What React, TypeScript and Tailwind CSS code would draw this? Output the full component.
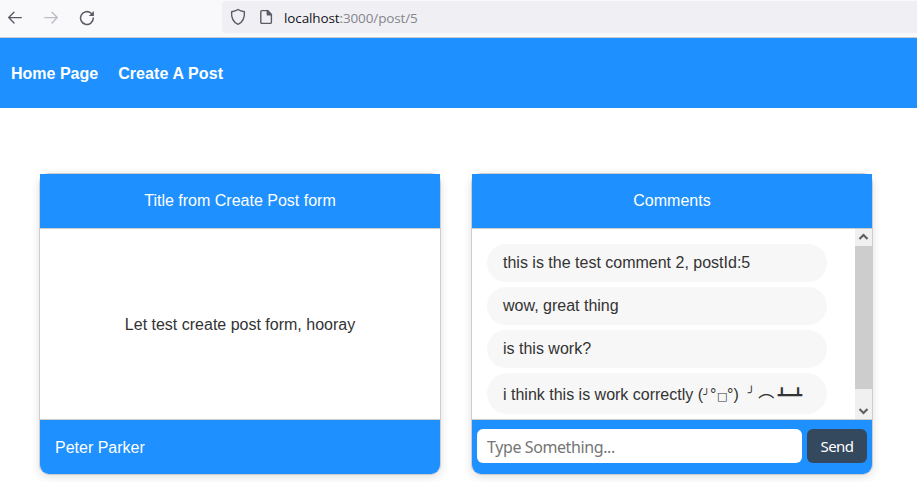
import type { ReactNode } from "react";

function BrowserBar() {
  return (
    <div className="flex h-[38px] border-b border-[#cccccc] bg-[#f9f9fb]">
      <div className="flex w-[222px] items-start gap-[18px] pl-[6px] pt-[9px]">
        <svg width="18" height="18" viewBox="0 0 18 18" fill="none" stroke="#5b5b66" strokeWidth="1.4" strokeLinecap="round" strokeLinejoin="round">
          <path d="M15.3 8.6H2.7M8 3.3L2.7 8.6L8 13.9" />
        </svg>
        <svg width="18" height="18" viewBox="0 0 18 18" fill="none" stroke="#bdbdc3" strokeWidth="1.4" strokeLinecap="round" strokeLinejoin="round">
          <path d="M2.7 8.6H15.3M10 3.3L15.3 8.6L10 13.9" />
        </svg>
        <svg width="18" height="18" viewBox="0 0 18 18" fill="none" stroke="#5b5b66" strokeWidth="1.5" strokeLinecap="round">
          <path d="M15.3 9A6.4 6.4 0 1 1 13.2 4.3" />
          <path d="M15.9 2V7.1H10.8Z" fill="#5b5b66" stroke="none" />
        </svg>
      </div>
      <div className="mt-px flex h-[32px] flex-1 items-start rounded-l bg-[#f0f0f4] pl-[8px]">
        <svg className="mt-[7px]" width="17" height="18" viewBox="0 0 17 18" fill="none" stroke="#5b5b66" strokeWidth="1.4" strokeLinejoin="round">
          <path d="M8 1.5C6.3 2.6 3.9 3.4 1.6 3.8C1.2 9.5 3.4 14.4 8 16.3C12.6 14.4 14.8 9.5 14.4 3.8C12.1 3.4 9.7 2.6 8 1.5Z" />
        </svg>
        <svg className="ml-[13px] mt-[8px]" width="13" height="16" viewBox="0 0 13 16" fill="none" stroke="#5b5b66" strokeWidth="1.4" strokeLinejoin="round">
          <path d="M1.8 1.6H7.6L11.4 5.4V13.2Q11.4 14.4 10.2 14.4H1.9Q0.8 14.4 0.8 13.2V2.8Q0.8 1.6 1.8 1.6Z" />
          <path d="M7.3 1.6V5.7H11.4Z" fill="#5b5b66" />
        </svg>
        <span className="ml-[11px] mt-[8px] whitespace-nowrap font-['Open_Sans','Noto_Sans',sans-serif] text-[13.5px] leading-[19px] tracking-[-0.12px] text-[#85858d]">
          <span className="text-[#15141a]">localhost</span>:3000/post/5
        </span>
      </div>
    </div>
  );
}

function Card({ title, children, footer }: { title: string; children: ReactNode; footer: ReactNode }) {
  return (
    <section className="h-[302px] w-[402px] rounded-[10px] border border-[#cccccc] shadow-[0_2px_10px_rgba(0,0,0,0.12)]">
      <header className="flex h-[55px] items-center justify-center border-b border-[#cccccc] bg-[#1e90ff] pb-px text-white">
        {title}
      </header>
      <div className="flex h-[190px] bg-white">{children}</div>
      <footer className="h-[55px] rounded-b-[9px] border-t border-[#cccccc] bg-[#1e90ff]">{footer}</footer>
    </section>
  );
}

const pill = "flex w-[340px] shrink-0 items-center rounded-[21px] bg-[#f7f7f7] px-4 whitespace-pre";

function Comments() {
  return (
    <>
      <div className="flex flex-1 flex-col gap-[5px] overflow-hidden pl-[15px] pt-[15px]">
        <div className={`${pill} h-[38px]`}>this is the test comment 2, postId:5</div>
        <div className={`${pill} h-[38px]`}>wow, great thing</div>
        <div className={`${pill} h-[38px]`}>is this work?</div>
        <div className={`${pill} h-[41px] pt-[2px]`}>
          i think this is work correctly (
          <span className="w-[7px] text-center font-['DejaVu_Sans_Mono'] text-[11px]">╯</span>
          <span className="w-[7px]">°</span>
          <span className="w-[10px] pt-[3px] text-center font-['DejaVu_Sans'] text-[11px] leading-none">□</span>
          <span>°)</span>
          <span className="ml-[8px] w-[9px] pb-[4px] text-center font-['DejaVu_Sans_Mono'] text-[12px]">╯</span>
          <span className="ml-[2px] w-[17px] pb-[6px] text-center text-[16px]">︵</span>
          <span className="ml-[3px] font-['DejaVu_Sans_Mono'] text-[13.5px]">┻━┻</span>
        </div>
      </div>
      <div className="flex w-[17px] flex-col bg-[#f0f0f0]">
        <svg width="17" height="17" viewBox="0 0 17 17" fill="none" stroke="#606060" strokeWidth="2.2">
          <path d="M4.5 10L8.5 6L12.5 10" />
        </svg>
        <div className="h-[143px] bg-[#cdcdcd]" />
        <svg className="mt-[13px]" width="17" height="17" viewBox="0 0 17 17" fill="none" stroke="#606060" strokeWidth="2.2">
          <path d="M4.5 7L8.5 11L12.5 7" />
        </svg>
      </div>
    </>
  );
}

function CommentForm() {
  return (
    <form className="flex gap-[5px] px-[5px] pt-[9px] font-['Noto_Sans',sans-serif] text-[16px]">
      <input
        className="h-[34px] w-[325px] rounded-[6px] bg-white px-[10px] pt-px tracking-[-0.4px] outline-none placeholder:text-[#757575]"
        placeholder="Type Something..."
      />
      <button type="button" className="h-[34px] w-[60px] rounded-[6px] bg-[#34495e] text-[15px] tracking-[-0.6px] text-white">
        Send
      </button>
    </form>
  );
}

export default function App() {
  return (
    <div className="h-[482px] overflow-hidden bg-white font-['Liberation_Sans',Arial,'Noto_Sans_CJK_JP',sans-serif] text-[16px] leading-[18px] text-[#333333]">
      <BrowserBar />
      <nav className="flex h-[70px] items-center gap-5 bg-[#1e90ff] pl-[11px] pt-[2px] font-bold text-white">
        <a>Home Page</a>
        <a className="tracking-[0.1px]">Create A Post</a>
      </nav>
      <main className="flex gap-[30px] pl-[39px] pt-[65px]">
        <Card title="Title from Create Post form" footer={<div className="pl-[15px] pt-[19px] text-white">Peter Parker</div>}>
          <p className="m-auto pt-[2px]">Let test create post form, hooray</p>
        </Card>
        <Card title="Comments" footer={<CommentForm />}>
          <Comments />
        </Card>
      </main>
    </div>
  );
}
